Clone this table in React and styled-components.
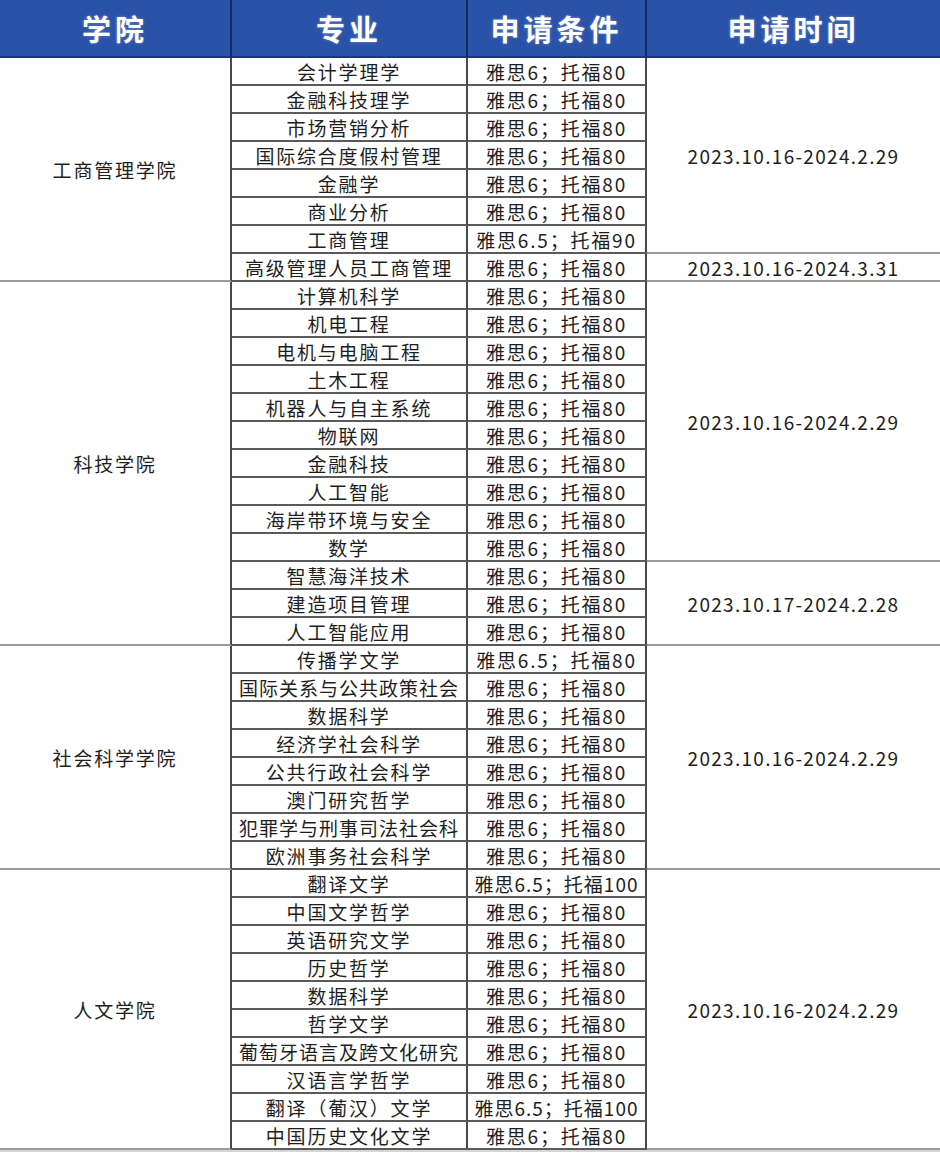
import React from "react";
import styled, { createGlobalStyle } from "styled-components";

const GlobalStyle = createGlobalStyle`
  body {
    margin: 0;
    background: #ffffff;
    font-family: "Noto Sans CJK SC", "Noto Sans", sans-serif;
  }
`;

const R6 = "雅思6；托福80";

const colleges = [
  {
    name: "工商管理学院",
    majors: [
      ["会计学理学", R6],
      ["金融科技理学", R6],
      ["市场营销分析", R6],
      ["国际综合度假村管理", R6],
      ["金融学", R6],
      ["商业分析", R6],
      ["工商管理", "雅思6.5；托福90"],
      ["高级管理人员工商管理", R6],
    ],
    periods: [
      [7, "2023.10.16-2024.2.29"],
      [1, "2023.10.16-2024.3.31"],
    ],
  },
  {
    name: "科技学院",
    majors: [
      ["计算机科学", R6],
      ["机电工程", R6],
      ["电机与电脑工程", R6],
      ["土木工程", R6],
      ["机器人与自主系统", R6],
      ["物联网", R6],
      ["金融科技", R6],
      ["人工智能", R6],
      ["海岸带环境与安全", R6],
      ["数学", R6],
      ["智慧海洋技术", R6],
      ["建造项目管理", R6],
      ["人工智能应用", R6],
    ],
    periods: [
      [10, "2023.10.16-2024.2.29"],
      [3, "2023.10.17-2024.2.28"],
    ],
  },
  {
    name: "社会科学学院",
    majors: [
      ["传播学文学", "雅思6.5；托福80"],
      ["国际关系与公共政策社会", R6],
      ["数据科学", R6],
      ["经济学社会科学", R6],
      ["公共行政社会科学", R6],
      ["澳门研究哲学", R6],
      ["犯罪学与刑事司法社会科", R6],
      ["欧洲事务社会科学", R6],
    ],
    periods: [[8, "2023.10.16-2024.2.29"]],
  },
  {
    name: "人文学院",
    majors: [
      ["翻译文学", "雅思6.5；托福100"],
      ["中国文学哲学", R6],
      ["英语研究文学", R6],
      ["历史哲学", R6],
      ["数据科学", R6],
      ["哲学文学", R6],
      ["葡萄牙语言及跨文化研究", R6],
      ["汉语言学哲学", R6],
      ["翻译（葡汉）文学", "雅思6.5；托福100"],
      ["中国历史文化文学", R6],
    ],
    periods: [[10, "2023.10.16-2024.2.29"]],
  },
];

const Table = styled.div`
  display: grid;
  width: 940px;
  grid-template-columns: 232px 236px 179px 293px;
  grid-template-rows: 58px;
  grid-auto-rows: 28px;
  border-bottom: 2px solid #d6d6d6;
`;

const Head = styled.div`
  display: flex;
  align-items: center;
  justify-content: center;
  background: #2a52a9;
  color: #ffffff;
  font-size: 29px;
  font-weight: 700;
  letter-spacing: 4px;
  text-shadow: 0 0 3px rgba(255, 255, 255, 0.35);
  border-bottom: 2px solid #1d3878;
  border-right: ${(p) => (p.$last ? "none" : "2px solid #16295c")};
`;

const Cell = styled.div`
  display: flex;
  align-items: center;
  justify-content: center;
  color: #1e1e1e;
  font-size: 19px;
  letter-spacing: ${(p) => (p.$date ? "1.3px" : p.$tight ? "1px" : "1.8px")};
  white-space: nowrap;
  overflow: hidden;
  border-bottom: 2px solid ${(p) => (p.$soft ? "#9a9a9a" : "#5a5a5a")};
  border-right: ${(p) => (p.$last ? "none" : "2px solid #4a4a4a")};
  grid-column: ${(p) => p.$col};
  grid-row: ${(p) => p.$row};
`;

export default function App() {
  const cells = [];
  let row = 2;
  colleges.forEach((c) => {
    const n = c.majors.length;
    cells.push(
      <Cell key={c.name} $col={1} $row={`${row} / span ${n}`} $soft>
        {c.name}
      </Cell>
    );
    c.majors.forEach(([major, req], i) => {
      cells.push(
        <Cell key={c.name + "m" + i} $col={2} $row={row + i} $tight={major.length > 10}>
          {major}
        </Cell>
      );
      cells.push(
        <Cell key={c.name + "r" + i} $col={3} $row={row + i} $tight={req.length > 10}>
          {req}
        </Cell>
      );
    });
    let r = row;
    c.periods.forEach(([span, date], i) => {
      cells.push(
        <Cell key={c.name + "p" + i} $col={4} $row={`${r} / span ${span}`} $last $soft $date>
          {date}
        </Cell>
      );
      r += span;
    });
    row += n;
  });

  return (
    <>
      <GlobalStyle />
      <Table>
        <Head>学院</Head>
        <Head>专业</Head>
        <Head>申请条件</Head>
        <Head $last>申请时间</Head>
        {cells}
      </Table>
    </>
  );
}
